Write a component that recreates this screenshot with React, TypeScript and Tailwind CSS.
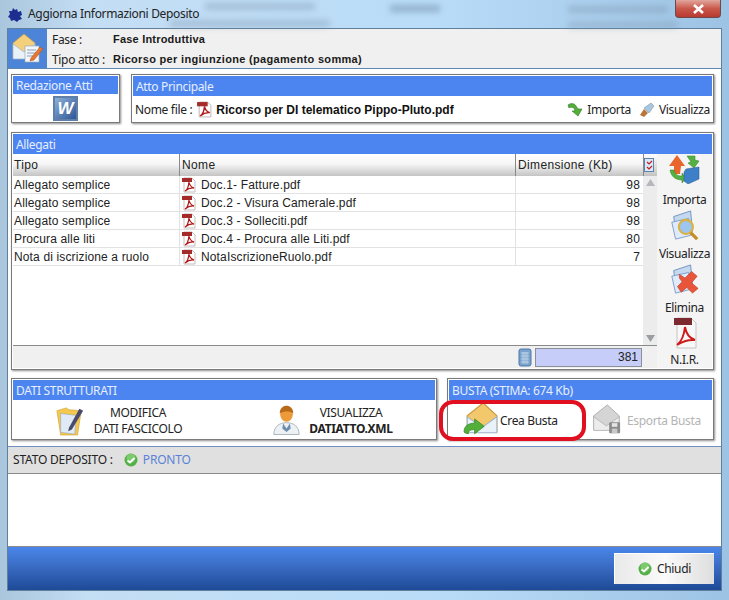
import React from "react";

const NOTO = "font-['Noto_Sans',sans-serif]";
const SEGOE = `${NOTO} tracking-[-0.33px]`;
const ARIAL = "font-['Liberation_Sans',Arial,sans-serif]";

const rows = [
  { tipo: "Allegato semplice", nome: "Doc.1- Fatture.pdf", dim: 98 },
  { tipo: "Allegato semplice", nome: "Doc.2 - Visura Camerale.pdf", dim: 98 },
  { tipo: "Allegato semplice", nome: "Doc.3 - Solleciti.pdf", dim: 98 },
  { tipo: "Procura alle liti", nome: "Doc.4 - Procura alle Liti.pdf", dim: 80 },
  { tipo: "Nota di iscrizione a ruolo", nome: "NotaIscrizioneRuolo.pdf", dim: 7 },
];

const PdfIcon = ({ size = 16 }: { size?: number }) => (
  <svg width={size} height={size} viewBox="0 0 16 16" className="shrink-0">
    <path d="M3 1h8l3 3v11H3z" fill="#fff" stroke="#b9a9a9" strokeWidth="0.8" />
    <rect x="1" y="1" width="10" height="4" fill="#a52a2a" />
    <path
      d="M4 14c2-1 3.500-4 4-9 .5 3 2 5 5 6-3-.3-6 .5-9 3z"
      fill="none"
      stroke="#b01818"
      strokeWidth="1.300"
    />
  </svg>
);

const Check = ({ size = 14 }: { size?: number }) => (
  <svg width={size} height={size} viewBox="0 0 14 14" className="shrink-0">
    <circle cx="7" cy="7" r="6.500" fill="#55b04a" />
    <circle cx="7" cy="5" r="4.500" fill="#8fd47d" opacity="0.7" />
    <path d="M3.500 7.500l2.500 2 4.500-4.500" fill="none" stroke="#fff" strokeWidth="1.800" />
  </svg>
);

const Envelope = ({ size = 34, grey = false }: { size?: number; grey?: boolean }) => (
  <svg width={size} height={size} viewBox="0 0 34 34" className="shrink-0">
    <path d="M4 13L19 1l13 12v15H4z" fill={grey ? "#d5d5d5" : "#f3c86c"} stroke={grey ? "#aaa" : "#c99a3c"} />
    <path d="M4 14l14 10 14-10v15H4z" fill={grey ? "#ececec" : "#eaf2f9"} stroke={grey ? "#b5b5b5" : "#9cb4c8"} />
    {grey ? (
      <g>
        <rect x="21" y="20" width="12" height="12" rx="1" fill="#8c8c8c" />
        <rect x="24" y="21" width="6" height="4" fill="#e5e5e5" />
        <rect x="24" y="27" width="6" height="5" fill="#c9c9c9" />
      </g>
    ) : (
      <path
        d="M1 28c0-6 5-8 10-8v-4l9 7-9 7v-4c-4 0-6 1-6 4-2-.5-4-1-4-2z"
        fill="#52b03a"
        stroke="#2e8520"
        strokeWidth="0.700"
      />
    )}
  </svg>
);

const Panel = ({
  title,
  className,
  barClass,
  children,
}: {
  title: string;
  className?: string;
  barClass?: string;
  children: React.ReactNode;
}) => (
  <div
    className={`flex flex-col bg-white border border-[#7a7a7a] p-px shadow-[1px_1px_2px_rgba(0,0,0,0.45)] ${className ?? ""}`}
  >
    <div
      className={`${barClass ?? "h-[20px] leading-[20px]"} shrink-0 bg-[#4c85f0] pl-[3px] pt-[1px] text-[12px] text-[#e6eeff] ${SEGOE}`}
    >
      {title}
    </div>
    {children}
  </div>
);

const SideButton = ({ label, children }: { label: string; children: React.ReactNode }) => (
  <div className="flex h-[54px] flex-col items-center justify-between pb-[1px]">
    <div className="flex justify-center">{children}</div>
    <span className={`text-[12px] leading-[16px] text-[#222] ${SEGOE}`}>{label}</span>
  </div>
);

const headCell = "bg-[linear-gradient(180deg,#fff_0,#f6f6f6_45%,#c4c4c4_100%)]";

export default function App() {
  return (
    <div className="relative flex h-[600px] w-[729px] flex-col overflow-hidden bg-[linear-gradient(90deg,#a9c6dc_0,#c4def4_12%,#b9dcf8_60%,#9dc3e4_100%)]">
      {/* fondo sfocato dietro la barra del titolo */}
      <div className="absolute left-[205px] top-[3px] h-[7px] w-[110px] bg-[#7a90a8] opacity-40 blur-[3px]" />
      <div className="absolute left-[170px] top-[20px] h-[7px] w-[160px] bg-[#7a90a8] opacity-40 blur-[3px]" />
      <div className="absolute left-[390px] top-[5px] h-[7px] w-[50px] bg-[#6a84a0] opacity-50 blur-[3px]" />
      <div className="absolute left-[568px] top-[6px] h-[7px] w-[100px] bg-[#7a90a8] opacity-40 blur-[3px]" />
      <div className="absolute left-[568px] top-[22px] h-[6px] w-[110px] bg-[#7a90a8] opacity-40 blur-[3px]" />

      <div className="relative flex h-[28px] shrink-0 items-center pl-[8px]">
        <svg width="15" height="15" viewBox="0 0 15 15" className="mr-[5px] shrink-0">
          <path
            d="M5 1l2 2 2-1 1 3 3-1 1 4-2 1 2 3-3 1-2 2-3-2-3 1-1-3-2-1 2-3-1-3 3 0z"
            fill="#1c2f90"
          />
        </svg>
        <span className={`text-[12px] text-[#222] ${SEGOE}`}>Aggiorna Informazioni Deposito</span>
        <div className="absolute right-[8px] top-0 flex h-[18px] w-[46px] items-center justify-center rounded-b-[4px] border border-t-0 border-[#6b4a4a] bg-[linear-gradient(180deg,#e2a79c_0,#c9584c_50%,#b93a30_100%)]">
          <svg width="13" height="10" viewBox="0 0 13 10">
            <path d="M2 1l9 8M11 1l-9 8" stroke="#fff" strokeWidth="2.600" />
          </svg>
        </div>
      </div>

      <div className="ml-[7px] mr-[7px] flex h-[563px] flex-col border border-[#5f7f9c] bg-white">
        {/* intestazione */}
        <div className="flex h-[40px] shrink-0 border-b border-[#5d86b0] bg-[#f0f0f0]">
          <div className="flex w-[39px] shrink-0 items-center justify-center bg-[#4c85d8]">
            <svg width="33" height="33" viewBox="0 0 33 33">
              <path d="M2 11L13 2l11 9v14H2z" fill="#f4cf7c" stroke="#c79a45" strokeWidth="0.700" />
              <path d="M2 12l11 8 11-8v15H2z" fill="#eaf2f9" stroke="#9db3c6" strokeWidth="0.700" />
              <rect x="14" y="14" width="14" height="16" fill="#f3f6fa" stroke="#98a8b8" strokeWidth="0.700" />
              <path d="M16 18h9M16 21h9M16 24h9" stroke="#8ca0b8" />
              <path d="M20 26l9-11 3 2-9 11-4 1z" fill="#e8772e" stroke="#a84f18" strokeWidth="0.500" />
            </svg>
          </div>
          <div className={`flex flex-col pl-[5px] pt-[2px] text-[12px] text-[#222] ${NOTO}`}>
            <div className="flex h-[17px] items-center tracking-[-0.33px]">
              <span className="w-[61px]">Fase :</span>
              <span className={`text-[11px] font-bold tracking-[0.2px] text-[#1a1a1a] ${ARIAL}`}>
                Fase Introduttiva
              </span>
            </div>
            <div className="mt-[3px] flex h-[17px] items-center tracking-[-0.33px]">
              <span className="w-[61px]">Tipo atto :</span>
              <span className={`text-[11px] font-bold tracking-[0.32px] text-[#1a1a1a] ${ARIAL}`}>
                Ricorso per ingiunzione (pagamento somma)
              </span>
            </div>
          </div>
        </div>

        {/* corpo */}
        <div className="flex h-[371px] shrink-0 flex-col gap-[8px] pl-[3px] pr-[7px] pt-[5px]">
          <div className="mb-[1px] flex h-[49px] shrink-0 gap-[11px]">
            <Panel title="Redazione Atti" barClass="h-[18px] leading-[18px]" className="w-[109px]">
              <div className="flex flex-1 items-center justify-center pt-[1px]">
                <div className="flex h-[25px] w-[25px] items-center justify-center border-2 border-[#5d7fa8] bg-[linear-gradient(135deg,#8fb0d8,#2c5596)]">
                  <span className={`text-[17px] font-bold italic leading-none text-white ${ARIAL}`}>W</span>
                </div>
              </div>
            </Panel>
            <Panel title="Atto Principale" className="flex-1">
              <div className={`flex flex-1 items-center pl-[2px] pr-[2px] pt-[2px] text-[12px] tracking-[-0.33px] text-[#222] ${NOTO}`}>
                <span>Nome file :</span>
                <span className="ml-[4px]">
                  <PdfIcon size={17} />
                </span>
                <span className={`ml-[3px] text-[12px] font-bold tracking-normal text-[#111] ${ARIAL}`}>
                  Ricorso per DI telematico Pippo-Pluto.pdf
                </span>
                <svg width="16" height="16" viewBox="0 0 16 16" className="ml-auto">
                  <path d="M1 3c3-2 6-2 8 1l2 3h4l-4 7-6-5h3L7 6C5 5 3 5 2 6z" fill="#55ad3c" stroke="#2d7c20" strokeWidth="0.600" />
                </svg>
                <span className="ml-[4px]">Importa</span>
                <svg width="16" height="16" viewBox="0 0 16 16" className="ml-[8px]">
                  <path d="M5 6l7-5 3 3-5 7z" fill="#a9c6de" stroke="#7f9bb2" strokeWidth="0.600" />
                  <path d="M5 7l4 4-4 4-4-2z" fill="#b9763a" />
                </svg>
                <span className="ml-[4px]">Visualizza</span>
              </div>
            </Panel>
          </div>

          <Panel title="Allegati" className="h-[238px] shrink-0">
            <div className="flex min-h-0 flex-1">
              <div className="flex w-[644px] shrink-0 flex-col">
                {/* griglia */}
                <div className={`flex h-[22px] shrink-0 text-[12px] leading-[22px] tracking-[0.35px] text-[#222] ${ARIAL}`}>
                  <div className={`w-[167px] border-r border-[#8a8a8a] pl-[1px] ${headCell}`}>Tipo</div>
                  <div className={`w-[336px] border-r border-[#8a8a8a] pl-[2px] ${headCell}`}>Nome</div>
                  <div className={`w-[127px] pl-[2px] ${headCell}`}>Dimensione (Kb)</div>
                  <div className="flex w-[14px] items-center justify-start border-l border-[#8a8a8a] bg-[linear-gradient(180deg,#fff_0,#c4c4c4_100%)]">
                    <div className="flex h-[14px] w-[10px] items-center justify-center border border-[#5d83b0] bg-[#dce8f6]">
                      <svg width="7" height="11" viewBox="0 0 7 11">
                        <path d="M1 2l2 2 3-3M1 7l2 2 3-3" fill="none" stroke="#c02020" strokeWidth="1.200" />
                      </svg>
                    </div>
                  </div>
                </div>
                <div className="flex min-h-0 flex-1">
                  <div className={`w-[630px] shrink-0 text-[12px] tracking-[0.14px] text-[#222] ${ARIAL}`}>
                    {rows.map((r) => (
                      <div key={r.nome} className="flex h-[18px] border-b border-[#e2e2e2] leading-[18px]">
                        <div className="w-[167px] border-r border-[#e2e2e2] pl-[1px]">{r.tipo}</div>
                        <div className="flex w-[336px] items-center gap-[2px] border-r border-[#e2e2e2] pl-[1px]">
                          <PdfIcon />
                          <span className="ml-[2px]">{r.nome}</span>
                        </div>
                        <div className="w-[127px] pr-[3px] text-right">{r.dim}</div>
                      </div>
                    ))}
                  </div>
                  <div className="flex flex-1 flex-col items-center justify-between bg-[#ececec] py-[3px]">
                    <svg width="9" height="7" viewBox="0 0 9 7">
                      <path d="M4.500 0L9 7H0z" fill="#b4b8bc" />
                    </svg>
                    <svg width="9" height="7" viewBox="0 0 9 7">
                      <path d="M4.500 7L9 0H0z" fill="#9a9ea3" />
                    </svg>
                  </div>
                </div>
                <div className="flex h-[23px] shrink-0 items-center justify-end border-t border-[#8a8a8a] bg-[#f0f0f0] pr-[15px]">
                  <svg width="14" height="19" viewBox="0 0 14 19" className="mr-[3px]">
                    <rect x="1" y="1" width="12" height="17" rx="2" fill="#7ba2cc" stroke="#4d79a8" />
                    <path d="M3 5h8M3 8h8M3 11h8M3 14h8M5 4v12M7 4v12M9 4v12" stroke="#c7d9ec" strokeWidth="0.800" />
                  </svg>
                  <div className={`h-[19px] w-[107px] border border-[#8a9098] bg-[#c5cdf8] pr-[3px] text-right text-[12px] leading-[17px] text-[#222] ${ARIAL}`}>
                    381
                  </div>
                </div>
              </div>
              {/* pulsanti laterali */}
              <div className="flex flex-1 flex-col bg-[#f4f4f4] pt-[1px]">
                <SideButton label="Importa">
                  <svg width="31" height="29" viewBox="0 0 31 29">
                    <path d="M8 0l8 11h-4l-1 8H5v-8H0z" fill="#e8662c" />
                    <path d="M18 1h8v4l4 1-5 7-6-5 3-1z" fill="#53b042" stroke="#338024" strokeWidth="0.500" />
                    <path d="M1 15h4c1 4 3 6 8 6v-3l4 5-4 5v-3C6 25 2 21 1 15z" fill="#53b042" stroke="#338024" strokeWidth="0.500" />
                    <path d="M17 14l13-2v12l-11 5-4-3V17z" fill="#3d80c8" stroke="#24568e" strokeWidth="0.500" />
                  </svg>
                </SideButton>
                <SideButton label="Visualizza">
                  <svg width="31" height="33" viewBox="0 0 33 33">
                    <path d="M5 7l18-6 2 22-17 6z" fill="#c4d8f0" stroke="#6d92c0" />
                    <path d="M3 13l18-4 2 18-16 4z" fill="#dfeafa" stroke="#7c9dc9" />
                    <circle cx="18" cy="18" r="7.500" fill="#9cc6ee" stroke="#dcb23e" strokeWidth="2.200" />
                    <path d="M23 24l7 7" stroke="#c48d26" strokeWidth="3.500" />
                  </svg>
                </SideButton>
                <SideButton label="Elimina">
                  <svg width="31" height="33" viewBox="0 0 33 33">
                    <path d="M5 7l18-6 2 22-17 6z" fill="#c4d8f0" stroke="#6d92c0" />
                    <path d="M3 13l18-4 2 18-16 4z" fill="#dfeafa" stroke="#7c9dc9" />
                    <path d="M11 11l6 4 7-7 6 5-6 7 7 6-6 5-6-6-6 5-4-6 5-5-3-4z" fill="#e8553a" stroke="#b8381f" strokeWidth="0.600" />
                  </svg>
                </SideButton>
                <div className="flex flex-1 flex-col items-center justify-between">
                  <svg width="24" height="32" viewBox="0 0 24 32">
                    <path d="M4 1h14l5 5v25H4z" fill="#f8f8f8" stroke="#c4c4c4" />
                    <rect x="1" y="1" width="18" height="7" fill="#7c2a30" />
                    <path d="M4 28c4-3 7-9 8-18 1 6 4 11 10 13-6-.5-12 1-18 5z" fill="none" stroke="#d01a1a" strokeWidth="2" />
                  </svg>
                  <span className={`text-[12px] leading-[16px] text-[#222] ${SEGOE}`}>N.I.R.</span>
                </div>
              </div>
            </div>
          </Panel>

          <div className="flex h-[62px] shrink-0 gap-[10px]">
            <Panel title="DATI STRUTTURATI" className="w-[426px]">
              <div className={`flex flex-1 pt-[3px] text-[12px] leading-[16px] text-[#222] ${SEGOE}`}>
                <div className="ml-[42px] flex items-center">
                  <svg width="30" height="32" viewBox="0 0 32 32">
                    <path d="M2 5l10-3 3 2 13 1-4 26H6z" fill="#f4c94e" stroke="#c99a2c" strokeWidth="0.600" />
                    <path d="M6 8l17 2-2 20-15-2z" fill="#dfeaf6" stroke="#8ea4bc" strokeWidth="0.600" />
                    <path d="M15 23l11-20 4 2-12 20-4 2z" fill="#4a4a6a" />
                  </svg>
                  <div className="ml-[7px] flex w-[92px] flex-col items-center whitespace-nowrap">
                    <span>MODIFICA</span>
                    <span>DATI FASCICOLO</span>
                  </div>
                </div>
                <div className="ml-[89px] flex items-center">
                  <svg width="27" height="34" viewBox="0 0 32 36">
                    <ellipse cx="16" cy="10" rx="7.500" ry="9" fill="#ec9a3a" />
                    <path d="M8 9c0-6 4-9 8-9s8 3 8 9c-4-3-11-3-16 0z" fill="#b86a18" />
                    <path d="M1 34c0-9 6-14 15-14s15 5 15 14z" fill="#eef1f4" stroke="#a0acb8" />
                    <path d="M12 21l4 6 4-6 1 6-5 4-5-4z" fill="#6d8eb0" />
                  </svg>
                  <div className="ml-[8px] flex w-[86px] flex-col items-center whitespace-nowrap">
                    <span>VISUALIZZA</span>
                    <span className="font-bold">DATIATTO.XML</span>
                  </div>
                </div>
              </div>
            </Panel>
            <Panel title="BUSTA (STIMA: 674 Kb)" className="flex-1">
              <div className={`flex flex-1 items-center whitespace-nowrap pt-[1px] text-[12px] ${SEGOE}`}>
                <div className="ml-[14px]">
                  <Envelope size={36} />
                </div>
                <span className="ml-[1px] mt-[3px] w-[56px] text-[#222]">Crea Busta</span>
                <div className="ml-[34px]">
                  <Envelope size={31} grey />
                </div>
                <span className="ml-[6px] mt-[3px] text-[#b4b4b4]">Esporta Busta</span>
              </div>
            </Panel>
          </div>
        </div>

        {/* stato */}
        <div className={`mt-[6px] flex h-[28px] shrink-0 items-center border-y border-[#6f8fc0] border-b-[#8a8a8a] bg-[#e0e0e0] pb-[1px] pl-[5px] text-[12px] tracking-[-0.2px] ${NOTO}`}>
          <span className="text-[#222]">STATO DEPOSITO :</span>
          <span className="ml-[11px]">
            <Check />
          </span>
          <span className="ml-[5px] text-[#5b82d8]">PRONTO</span>
        </div>
        <div className="h-[72px] shrink-0 bg-white" />
        <div className="flex flex-1 items-center justify-end border-t border-[#8a8a8a] bg-[linear-gradient(180deg,#4a86ea_0,#3a6cc4_45%,#1e4a96_100%)] pr-[7px]">
          <div className={`flex h-[31px] w-[100px] items-center justify-center gap-[5px] border-l border-t border-white bg-[linear-gradient(90deg,#e9e9e9_0,#fafafa_50%,#dedede_100%)] text-[12px] text-[#222] ${SEGOE}`}>
            <Check />
            <span>Chiudi</span>
          </div>
        </div>
      </div>

      {/* cerchio rosso di annotazione */}
      <div className="absolute left-[439px] top-[400px] h-[41px] w-[147px] rounded-[14px] border-[4px] border-[#e01020]" />
    </div>
  );
}
